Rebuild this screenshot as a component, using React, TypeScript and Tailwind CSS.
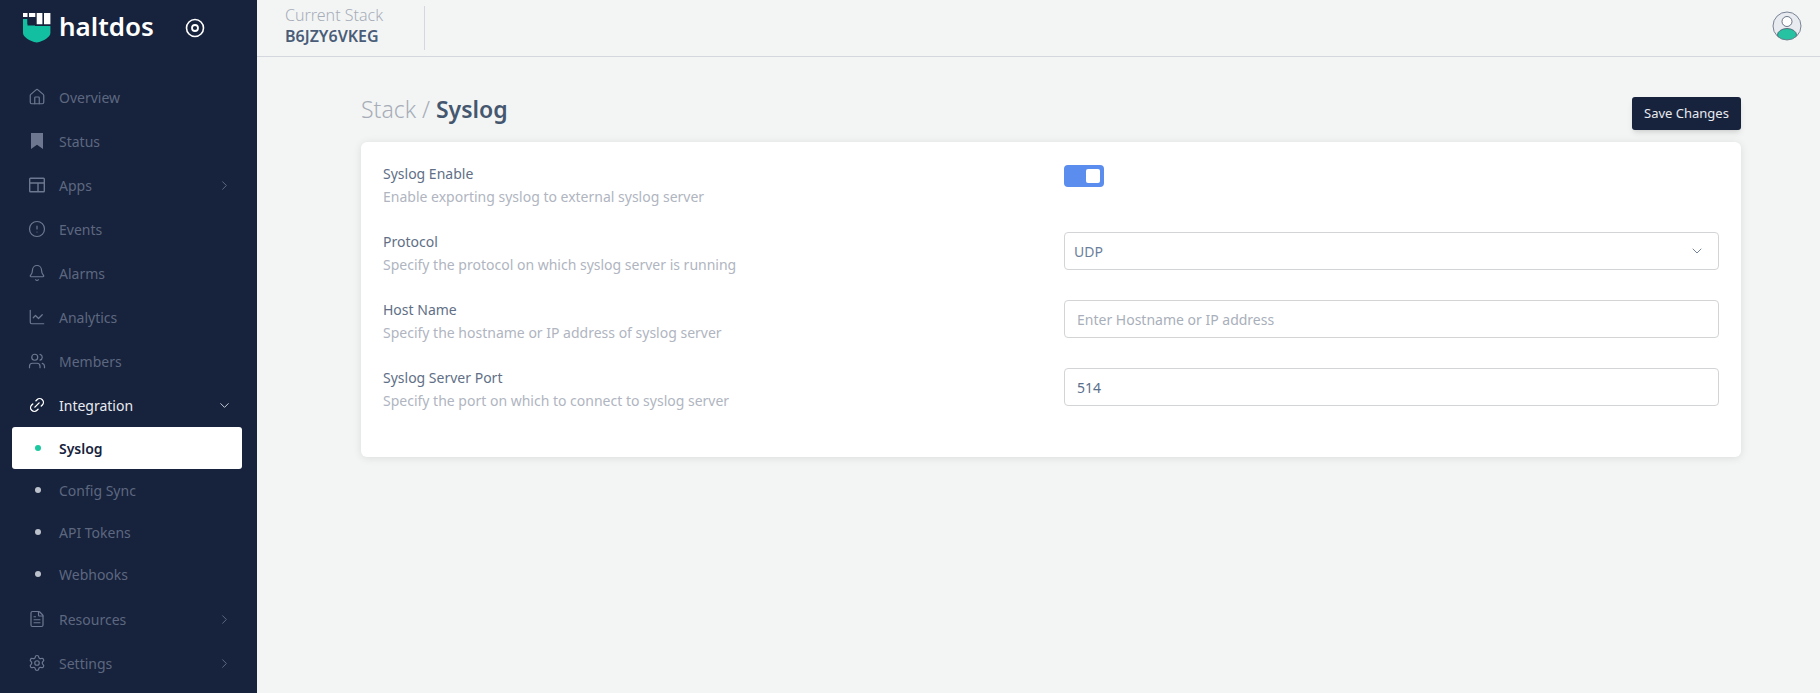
import React from "react";
import { ChevronDown, ChevronRight, House, Bell, LineChart, Users, Link2, FileText, Settings, CircleAlert } from "lucide-react";

const Logo = () => (
  <svg width="30" height="32" viewBox="0 0 30 32" className="shrink-0">
    <path d="M1 1h4.500v4H1zM7 1h6.300v4H7zM14.700 1h5.700v11.300h-5.700zM22 1h6.400v11.300H22z" fill="#fff" />
    <path d="M1 7h4.500v6.500H13V14h15.400v7c0 4-6.500 8-13.700 9.600C7.500 29 1 25 1 21z" fill="#12bfa0" />
    <path d="M5.500 7h7.800v5H5.500z" fill="#17223c" />
  </svg>
);

const BookmarkIcon = () => (
  <svg width="18" height="18" viewBox="0 0 18 18">
    <path d="M3 1h12v16l-6-4.300L3 17z" fill="#6d7890" />
  </svg>
);

const AppsIcon = () => (
  <svg width="18" height="18" viewBox="0 0 18 18" fill="none" stroke="#6d7890" strokeWidth="1.4">
    <rect x="1.700" y="2.300" width="14.600" height="13.400" rx="0.800" />
    <path d="M1.700 7h14.600M10 7v8.700" />
  </svg>
);

const dim = "#6d7890";

const topItems = [
  { label: "Overview", icon: <House size={18} color={dim} strokeWidth={1.6} /> },
  { label: "Status", icon: <BookmarkIcon /> },
  { label: "Apps", icon: <AppsIcon />, arrow: true },
  { label: "Events", icon: <CircleAlert size={18} color={dim} strokeWidth={1.6} /> },
  { label: "Alarms", icon: <Bell size={18} color={dim} strokeWidth={1.6} /> },
  { label: "Analytics", icon: <LineChart size={18} color={dim} strokeWidth={1.6} /> },
  { label: "Members", icon: <Users size={18} color={dim} strokeWidth={1.6} /> },
];

const subItems = ["Config Sync", "API Tokens", "Webhooks"];

const fields = [
  { label: "Syslog Enable", desc: "Enable exporting syslog to external syslog server" },
  { label: "Protocol", desc: "Specify the protocol on which syslog server is running" },
  { label: "Host Name", desc: "Specify the hostname or IP address of syslog server" },
  { label: "Syslog Server Port", desc: "Specify the port on which to connect to syslog server" },
];

const NavRow = ({ label, icon, arrow }: { label: string; icon: React.ReactNode; arrow?: boolean }) => (
  <div className="flex h-[44px] items-center pl-[28px] pr-[25px] text-[14px] text-[#5d6880]">
    <span className="flex w-[31px] shrink-0 justify-start">{icon}</span>
    <span className="flex-1">{label}</span>
    {arrow && <ChevronRight size={15} color="#5d6880" strokeWidth={1.6} />}
  </div>
);

const Field = ({ index }: { index: number }) => {
  if (index === 0) {
    return (
      <div className="mt-px flex h-[22px] w-[40px] items-center justify-end rounded-[4px] bg-[#5b8def] pr-[4px]">
        <div className="h-[14px] w-[14px] rounded-[2px] bg-white" />
      </div>
    );
  }
  if (index === 1) {
    return (
      <div className="flex h-[38px] items-center justify-between rounded-[4px] border border-[#d3d4d6] bg-white pl-[9px] pr-[13px] text-[14px] text-[#6b7f9c]">
        UDP
        <ChevronDown size={16} color="#6b7a90" strokeWidth={1.4} />
      </div>
    );
  }
  if (index === 2) {
    return (
      <div className="flex h-[38px] items-center rounded-[4px] border border-[#d3d4d6] bg-white px-[12px] text-[14px] text-[#a9afba]">
        Enter Hostname or IP address
      </div>
    );
  }
  return (
    <div className="flex h-[38px] items-center rounded-[4px] border border-[#d3d4d6] bg-white px-[12px] text-[14px] text-[#5a6f8c]">
      514
    </div>
  );
};

export default function App() {
  return (
    <div className="flex h-[693px] w-full overflow-hidden bg-[#f3f5f5] font-['Noto_Sans',sans-serif]">
      {/* sidebar */}
      <aside className="flex w-[257px] shrink-0 flex-col bg-[#17223c]">
        <div className="flex h-[75px] items-start pl-[22px] pt-[12px]">
          <Logo />
          <span className="ml-[7px] mt-[-2px] w-[112px] text-[26px] font-semibold leading-[32px] text-white">haltdos</span>
          <svg width="20" height="20" viewBox="0 0 20 20" className="ml-[14px] mt-[6px]" fill="none" stroke="#fff">
            <circle cx="10" cy="10" r="8.500" strokeWidth="1.600" />
            <circle cx="10" cy="10" r="3" strokeWidth="1.800" />
          </svg>
        </div>

        {topItems.map((item) => (
          <NavRow key={item.label} {...item} />
        ))}

        <div className="flex h-[44px] items-center pl-[28px] pr-[25px] text-[14px] text-[#e8eaf0]">
          <span className="flex w-[31px] shrink-0">
            <Link2 size={18} color="#fff" strokeWidth={1.8} className="-rotate-45" />
          </span>
          <span className="flex-1">Integration</span>
          <ChevronDown size={15} color="#c8ccd6" strokeWidth={1.6} />
        </div>

        <div className="ml-[12px] mr-[15px] flex h-[42px] items-center rounded-[3px] bg-white pl-[23px] text-[14px] font-semibold text-[#17223c]">
          <span className="h-[6px] w-[6px] rounded-full bg-[#1cc8a0]" />
          <span className="ml-[18px]">Syslog</span>
        </div>

        {subItems.map((label) => (
          <div key={label} className="flex h-[42px] items-center pl-[35px] text-[14px] text-[#5d6880]">
            <span className="h-[6px] w-[6px] rounded-full bg-[#bcc2cc]" />
            <span className="ml-[18px]">{label}</span>
          </div>
        ))}

        <div className="h-[2px] shrink-0" />
        <NavRow label="Resources" icon={<FileText size={18} color={dim} strokeWidth={1.6} />} arrow />
        <NavRow label="Settings" icon={<Settings size={18} color={dim} strokeWidth={1.6} />} arrow />
      </aside>

      <div className="flex min-w-0 flex-1 flex-col">
        {/* header */}
        <header className="flex h-[57px] shrink-0 items-center justify-between border-b border-[#d5d7de] pl-[28px] pr-[18px]">
          <div className="flex h-[44px] w-[140px] items-center border-r border-[#d5d7de]">
            <div className="mt-[-4px]">
              <div className="text-[16px] font-light leading-[21px] text-[#a7adb8]">Current Stack</div>
              <div className="text-[16px] font-semibold leading-[21px] text-[#4a5d78]">B6JZY6VKEG</div>
            </div>
          </div>
          <svg width="30" height="30" viewBox="0 0 30 30" className="mb-[4px]">
            <defs>
              <clipPath id="avatarClip">
                <circle cx="15" cy="15" r="14" />
              </clipPath>
            </defs>
            <circle cx="15" cy="15" r="14" fill="#e8ebef" />
            <ellipse cx="15" cy="24" rx="9.500" ry="6.500" fill="#26c2a2" stroke="#47566b" strokeWidth="0.800" clipPath="url(#avatarClip)" />
            <circle cx="15" cy="10.500" r="5" fill="#fff" stroke="#47566b" strokeWidth="0.800" />
            <circle cx="15" cy="15" r="14" fill="none" stroke="#6c7789" strokeWidth="0.900" />
          </svg>
        </header>

        {/* page */}
        <main className="pl-[104px] pr-[79px] pt-[40px]">
          <div className="flex h-[45px] items-start justify-between">
            <h1 className="mt-[-4px] text-[23px] font-light leading-[32px] text-[#a7adb8]">
              Stack / <span className="font-semibold text-[#45576f]">Syslog</span>
            </h1>
            <button className="h-[33px] w-[109px] rounded-[3px] bg-[#17223c] text-[13px] text-[#e8eaf0] shadow-md">
              Save Changes
            </button>
          </div>

          <div className="rounded-[6px] bg-white px-[22px] pb-[21px] pt-[22px] shadow-[0_1px_8px_rgba(0,0,0,0.1)]">
            {fields.map((field, i) => (
              <div key={field.label} className="grid h-[68px] grid-cols-[681px_1fr] items-start">
                <div>
                  <div className="text-[14px] leading-[20px] text-[#616f86]">{field.label}</div>
                  <div className="mt-[3px] text-[14px] leading-[20px] text-[#b0b5bf]">{field.desc}</div>
                </div>
                <Field index={i} />
              </div>
            ))}
          </div>
        </main>
      </div>
    </div>
  );
}
